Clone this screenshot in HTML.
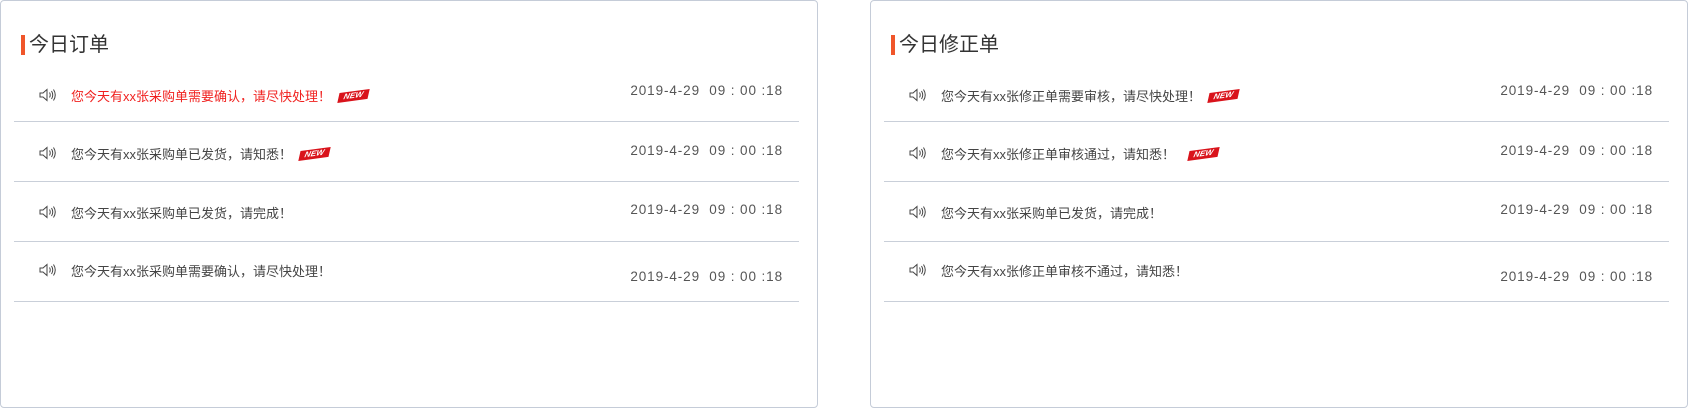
<!DOCTYPE html>
<html><head><meta charset="utf-8"><style>
body{margin:0;width:1688px;height:410px;background:#fff;font-family:"Liberation Sans","Noto Sans CJK SC",sans-serif;position:relative;overflow:hidden}
.p{position:absolute;top:0;height:408px;border:1px solid #c5ccd8;border-radius:4px;box-sizing:border-box}
.t{position:absolute;left:20px;top:34px;font-size:20px;color:#333;border-left:4px solid #f0562a;padding-left:4px;line-height:20px}
.l{position:absolute;left:13px;height:1px;background:#c9cfd9}
.r{position:absolute;font-size:13px;color:#444;white-space:nowrap}
.d{position:absolute;font-size:13.5px;color:#555;white-space:nowrap;text-align:right;letter-spacing:0.9px}
.ic{position:absolute;width:18px;height:14px}
.n{display:inline-block;background:#d9131b;color:#fff;font-size:8px;font-weight:bold;font-style:italic;padding:0 5px;transform:skewX(-20deg) rotate(-8deg);margin-left:8px;line-height:10px;vertical-align:3px;letter-spacing:0}
</style></head><body>
<svg width="0" height="0" style="position:absolute"><defs><g id="sp" fill="none" stroke="#444" stroke-width="1"><path d="M1 5h3l4-3.5v11L4 9H1z"/><path d="M10.5 4.5q1.5 2.5 0 5M12.5 3q2.5 4 0 8M14.5 1.5q3.5 5.5 0 11"/></g></defs></svg>

<div class="p" style="left:0;width:818px">
<div class="t">今日订单</div>
<div class="l" style="top:120px;width:785px"></div>
<div class="l" style="top:180px;width:785px"></div>
<div class="l" style="top:240px;width:785px"></div>
<div class="l" style="top:300px;width:785px"></div>
<svg class="ic" style="left:38px;top:87px"><use href="#sp"/></svg>
<div class="r" style="left:70px;top:85px;color:#f0211f">您今天有xx张采购单需要确认，请尽快处理！<span class="n">NEW</span></div>
<div class="d" style="right:34px;top:82px">2019-4-29&nbsp; 09 : 00 :18</div>
<svg class="ic" style="left:38px;top:145px"><use href="#sp"/></svg>
<div class="r" style="left:70px;top:143px">您今天有xx张采购单已发货，请知悉！<span class="n">NEW</span></div>
<div class="d" style="right:34px;top:142px">2019-4-29&nbsp; 09 : 00 :18</div>
<svg class="ic" style="left:38px;top:204px"><use href="#sp"/></svg>
<div class="r" style="left:70px;top:202px">您今天有xx张采购单已发货，请完成！</div>
<div class="d" style="right:34px;top:201px">2019-4-29&nbsp; 09 : 00 :18</div>
<svg class="ic" style="left:38px;top:262px"><use href="#sp"/></svg>
<div class="r" style="left:70px;top:260px">您今天有xx张采购单需要确认，请尽快处理！</div>
<div class="d" style="right:34px;top:268px">2019-4-29&nbsp; 09 : 00 :18</div>
</div>

<div class="p" style="left:870px;width:818px">
<div class="t">今日修正单</div>
<div class="l" style="top:120px;width:785px"></div>
<div class="l" style="top:180px;width:785px"></div>
<div class="l" style="top:240px;width:785px"></div>
<div class="l" style="top:300px;width:785px"></div>
<svg class="ic" style="left:38px;top:87px"><use href="#sp"/></svg>
<div class="r" style="left:70px;top:85px">您今天有xx张修正单需要审核，请尽快处理！<span class="n">NEW</span></div>
<div class="d" style="right:34px;top:82px">2019-4-29&nbsp; 09 : 00 :18</div>
<svg class="ic" style="left:38px;top:145px"><use href="#sp"/></svg>
<div class="r" style="left:70px;top:143px">您今天有xx张修正单审核通过，请知悉！<span class="n" style="margin-left:14px">NEW</span></div>
<div class="d" style="right:34px;top:142px">2019-4-29&nbsp; 09 : 00 :18</div>
<svg class="ic" style="left:38px;top:204px"><use href="#sp"/></svg>
<div class="r" style="left:70px;top:202px">您今天有xx张采购单已发货，请完成！</div>
<div class="d" style="right:34px;top:201px">2019-4-29&nbsp; 09 : 00 :18</div>
<svg class="ic" style="left:38px;top:262px"><use href="#sp"/></svg>
<div class="r" style="left:70px;top:260px">您今天有xx张修正单审核不通过，请知悉！</div>
<div class="d" style="right:34px;top:268px">2019-4-29&nbsp; 09 : 00 :18</div>
</div>
</body></html>
